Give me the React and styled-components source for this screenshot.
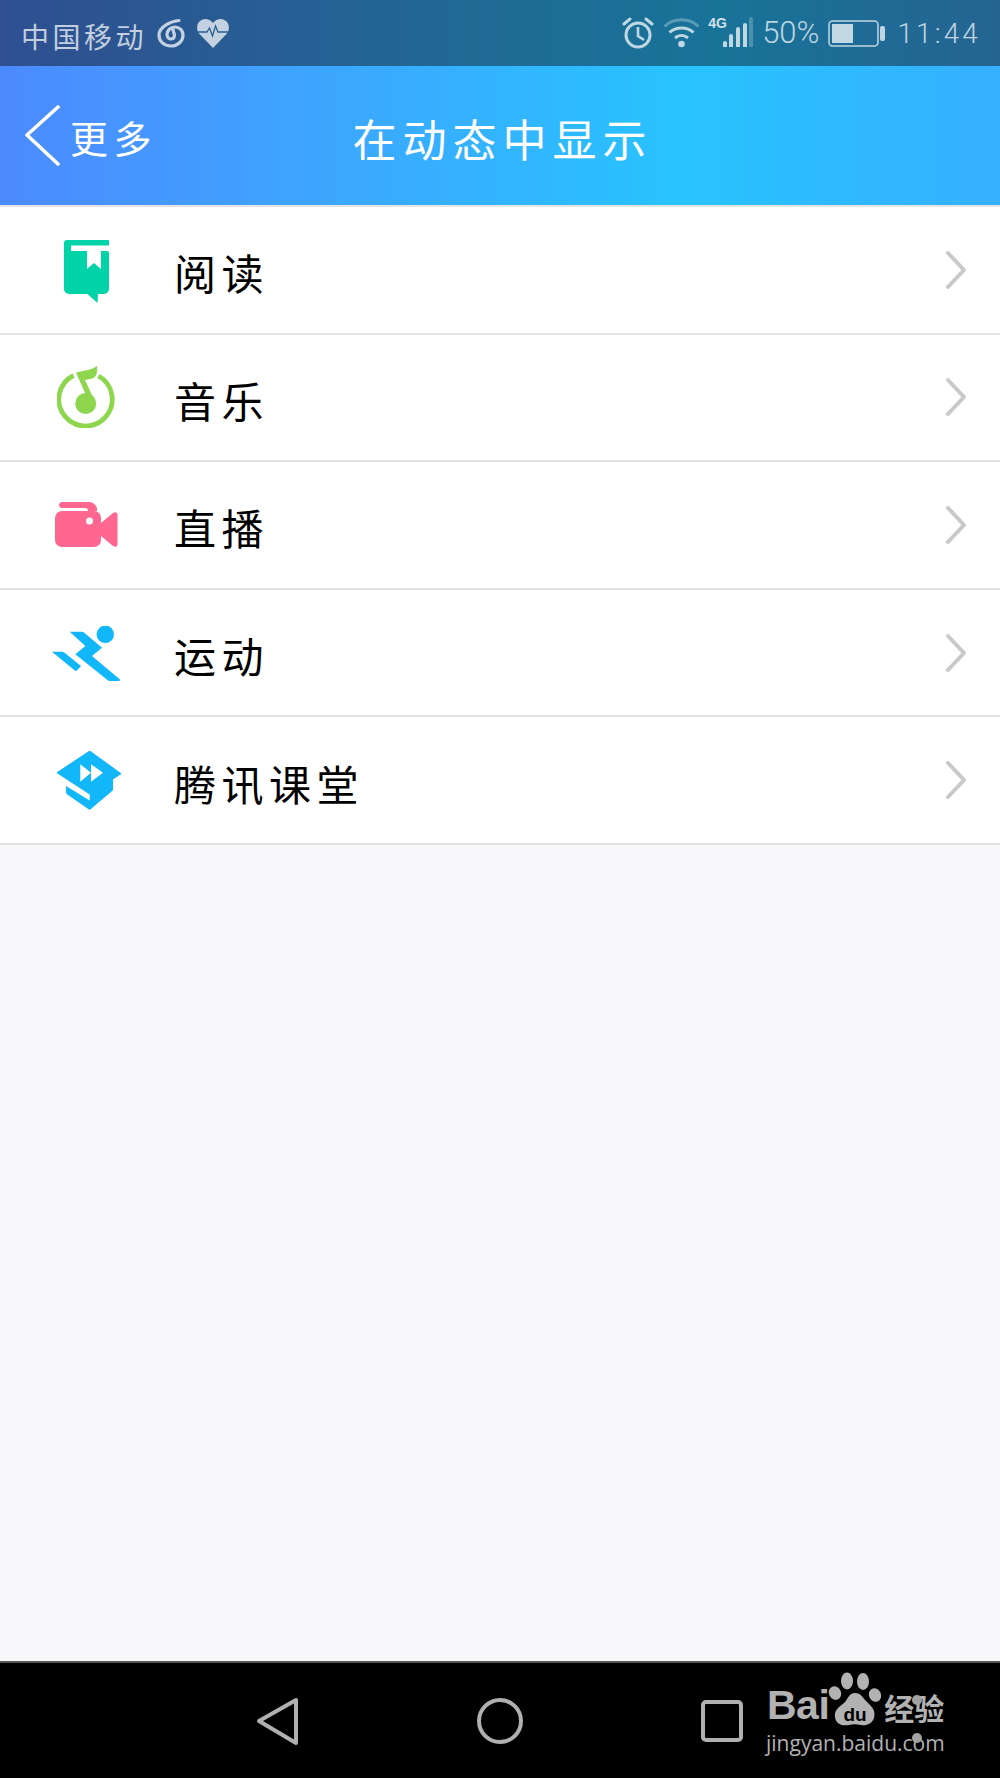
import styled, { createGlobalStyle } from "styled-components";

const GlobalStyle = createGlobalStyle`
    html, body {
        margin: 0;
        padding: 0;
        background: #f8f8fb;
    }
    * {
        box-sizing: border-box;
    }
    svg {
        flex: none;
        display: block;
    }
`;

const CJK = `"Noto Sans CJK SC", "Noto Sans", sans-serif`;
const STATUS_COLOR = "rgba(255,255,255,0.72)";

const Page = styled.div`
    position: relative;
    width: 1000px;
    height: 1778px;
    display: flex;
    flex-direction: column;
    background: #f8f8fb;
    font-family: ${CJK};
    overflow: hidden;
`;

const StatusBar = styled.div`
    height: 66px;
    flex: none;
    display: flex;
    justify-content: space-between;
    align-items: center;
    padding: 0 22px;
    color: ${STATUS_COLOR};
    background: linear-gradient(90deg, #2f4f90 0%, #1f6b96 50%, #187399 72%, #256492 100%);
`;

const StatusGroup = styled.div`
    display: flex;
    align-items: center;
`;

const Carrier = styled.span`
    font-size: 28px;
    letter-spacing: 3.5px;
    line-height: 32px;
    padding-top: 5px;
    margin-left: -1px;
    margin-right: 10px;
`;

const Percent = styled.span`
    font-family: Roboto, sans-serif;
    font-weight: 300;
    font-size: 31px;
    line-height: 32px;
    margin: 0 9px 0 9px;
`;

const Clock = styled.span`
    font-family: Roboto, sans-serif;
    font-weight: 300;
    font-size: 28px;
    letter-spacing: 3.1px;
    line-height: 32px;
    margin-left: 12px;
    margin-right: -3px;
    padding-top: 2px;
`;

const Signal = styled.div`
    position: relative;
    width: 45px;
    height: 30px;
    margin-left: 8px;
    margin-top: -2px;
    display: flex;
    align-items: flex-end;
    justify-content: flex-end;
    gap: 2.6px;
`;

const SignalTag = styled.span`
    position: absolute;
    left: 0;
    top: -2px;
    font-family: "Liberation Sans", sans-serif;
    font-weight: 700;
    font-size: 14px;
    line-height: 16px;
    color: rgba(255,255,255,0.8);
`;

const SignalBar = styled.i`
    display: block;
    width: 4px;
    height: ${(p) => p.$h}px;
    border-radius: 2px 2px 0 0;
    background: ${(p) => (p.$dim ? "rgba(255,255,255,0.22)" : STATUS_COLOR)};
`;

const Header = styled.header`
    height: 139px;
    flex: none;
    display: grid;
    grid-template-columns: 1fr auto 1fr;
    align-items: center;
    color: #fff;
    background: linear-gradient(90deg, #4c8aff 0%, #3ea4ff 30%, #28c3ff 68%, #36b0ff 100%);
`;

const Back = styled.div`
    display: flex;
    align-items: center;
    padding-left: 24px;
`;

const BackLabel = styled.span`
    font-size: 38px;
    letter-spacing: 5.5px;
    line-height: 44px;
    padding-top: 3px;
    margin-left: 10px;
`;

const Title = styled.h1`
    margin: 0;
    font-size: 44px;
    font-weight: 400;
    letter-spacing: 6px;
    line-height: 50px;
    padding-top: 4px;
    padding-left: 5px;
`;

const List = styled.ul`
    list-style: none;
    margin: 0;
    padding: 0;
    border-top: 2px solid #e4e4e4;
    background: #fff;
`;

const Row = styled.li`
    height: 127.6px;
    display: flex;
    align-items: center;
    padding-right: 33px;
    border-bottom: 2px solid #e3e3e3;
`;

const IconCell = styled.div`
    width: 174px;
    flex: none;
    display: flex;
    justify-content: center;
    padding-right: 2px;
    padding-top: ${(p) => p.$top || 0}px;
    padding-left: ${(p) => p.$left || 0}px;
`;

const Label = styled.span`
    flex: 1;
    color: #000;
    font-size: 42px;
    letter-spacing: 5.5px;
    line-height: 46px;
    padding-top: 5px;
`;

const Filler = styled.div`
    flex: 1;
`;

const NavBar = styled.nav`
    height: 117px;
    flex: none;
    display: flex;
    align-items: center;
    padding-left: 256px;
    background: #000;
    border-top: 2px solid #555;
    gap: 176px;
`;

const Watermark = styled.div`
    position: absolute;
    left: 766px;
    top: 1672px;
    width: 182px;
    color: #b2b2b2;
`;

const LogoLine = styled.div`
    display: flex;
    align-items: flex-end;
    height: 56px;
`;

const LogoBai = styled.span`
    font-family: "Liberation Sans", sans-serif;
    font-weight: 700;
    font-size: 41px;
    line-height: 46px;
    letter-spacing: -0.5px;
    margin-left: 1px;
`;

const LogoExp = styled.span`
    font-size: 30px;
    font-weight: 700;
    line-height: 42px;
`;

const LogoUrl = styled.div`
    font-family: "Open Sans", sans-serif;
    font-size: 21px;
    line-height: 28px;
    margin-top: 1px;
    white-space: nowrap;
`;

const WatermarkDot = styled.i`
    position: absolute;
    left: 146px;
    top: ${(p) => p.$top}px;
    width: 10px;
    height: 10px;
    border-radius: 50%;
    background: #a2a2a2;
`;

const PawSvg = styled.svg`
    margin-left: -1px;
`;

const HeartSvg = styled.svg`
    margin-left: 12px;
`;

const WifiSvg = styled.svg`
    margin-left: 9px;
`;

const Paw = () => (
    <PawSvg width="56" height="56" viewBox="0 0 56 56">
        <g fill="#b2b2b2">
            <ellipse cx="7" cy="21" rx="6" ry="7" transform="rotate(-25 7 21)" />
            <ellipse cx="19" cy="9" rx="6" ry="8.5" />
            <ellipse cx="35" cy="9.5" rx="6" ry="8.5" />
            <ellipse cx="47" cy="23" rx="6" ry="7" transform="rotate(-25 47 23)" />
            <path d="M27 21c6 0 8 5 12 9 5 5 9 8 7 16-2 6-8 8-13 7-4-1-8-1-12 0-6 1-13 0-14-8-1-7 4-10 9-14 4-4 5-10 11-10z" />
        </g>
        <text x="27" y="49" textAnchor="middle" fontFamily="Liberation Sans" fontWeight="700" fontSize="19" fill="#000">du</text>
    </PawSvg>
);

const Alarm = () => (
    <svg width="32" height="34" viewBox="0 0 32 34" fill="none" stroke="currentColor">
        <circle cx="16" cy="19" r="12" strokeWidth="3" />
        <path d="M16 11v9l6 4" strokeWidth="2.6" />
        <path d="M2 8l6-5M30 8l-6-5" strokeWidth="3" strokeLinecap="round" />
    </svg>
);

const Wifi = () => (
    <WifiSvg width="37" height="30" viewBox="0 0 37 30" fill="none" stroke="currentColor" strokeWidth="3">
        <path d="M1.5 8.5c9-9 25-9 34 0" opacity="0.4" />
        <path d="M6.5 14.5c6.5-6 17.5-6 24 0" />
        <path d="M12 20c4-3.5 9-3.5 13 0" />
        <circle cx="18.5" cy="26" r="3.3" fill="currentColor" stroke="none" />
    </WifiSvg>
);

const Battery = () => (
    <svg width="57" height="27" viewBox="0 0 57 27">
        <rect x="1" y="1" width="49" height="25" rx="3.5" fill="none" stroke="currentColor" strokeWidth="1.5" />
        <rect x="4" y="4" width="21" height="19" fill="#c2d8e2" />
        <rect x="52" y="6" width="5" height="15" rx="2" fill="currentColor" />
    </svg>
);

const Netease = () => (
    <svg width="28" height="30" viewBox="0 0 28 30" fill="none" stroke="currentColor" strokeWidth="3.2" strokeLinecap="round">
        <path d="M22 2.5C14 3 2 9 2 17c0 6.5 5 11 12 11s12-5 12-11c0-5-4-8-8-8-4.5 0-8 3.5-8 7.5 0 3 2 4.5 4 4.5s3.5-1.5 3.5-4l-2-7" />
    </svg>
);

const Heart = () => (
    <HeartSvg width="32" height="30" viewBox="0 0 32 30">
        <path d="M16 30L2.5 16C-1 12-.5 6 3 3c4-3.5 9.5-2.5 13 2 3.5-4.5 9-5.5 13-2 3.5 3 4 9 .5 13z" fill="currentColor" />
        <path d="M1 14h9l2.5-4 3 8 3-10 2.5 6h10" fill="none" stroke="#2a5f92" strokeWidth="1.3" />
    </HeartSvg>
);

const Chevron = () => (
    <svg width="22" height="40" viewBox="0 0 22 40" fill="none" stroke="#c9c9c9" strokeWidth="4" strokeLinecap="round" strokeLinejoin="round">
        <path d="M3 3l16 17L3 37" />
    </svg>
);

const BookIcon = () => (
    <svg width="45" height="63" viewBox="0 0 45 63">
        <path d="M3 0h40.5a1.5 1.5 0 0 1 0 5.5H7V11h36a2 2 0 0 1 2 2v36a5 5 0 0 1-5 5h-6l-.5 9-10-9H5a5 5 0 0 1-5-5V3a3 3 0 0 1 3-3z" fill="#00d3a7" />
        <path d="M23 11h14v18l-7-6-7 6z" fill="#fff" />
    </svg>
);

const MusicIcon = () => (
    <svg width="58" height="62" viewBox="0 0 58 62">
        <path d="M16.5 9.5a26.7 26.7 0 1 0 25 .5" fill="none" stroke="#8fd64f" strokeWidth="4.8" />
        <circle cx="28.7" cy="37.5" r="10.5" fill="#8fd64f" />
        <path d="M19 6.5C25 5 35 4 40 0c.5 4 0 9-2 11-3 2-6 2.5-10 3l11 24-5 2.5z" fill="#8fd64f" />
    </svg>
);

const CameraIcon = () => (
    <svg width="63" height="45" viewBox="0 0 63 45">
        <path d="M7 0h27c4 0 7 3 8 6v3H33c0-2-1-3-3-3H7C3 6 3 0 7 0z" fill="#ff6791" />
        <rect x="0" y="9" width="46" height="36" rx="7" fill="#ff6791" />
        <path d="M46 21l12-10c2-1.5 4.5-1 4.5 2v29c0 3-2.500 3.500-4.500 2L46 34z" fill="#ff6791" />
        <circle cx="34.5" cy="19" r="3.5" fill="#fff" />
    </svg>
);

const RunnerIcon = () => (
    <svg width="68" height="55" viewBox="0 0 68 55">
        <g fill="#12b7fa">
            <circle cx="53.3" cy="8.3" r="8.7" />
            <path d="M17.7 5.7h12l2 .5L50 21.7 40 30l27.7 23.3c.5.8 0 1.7-1 1.7H58c-1 0-2-.5-2.5-1L23.3 28.3 33.3 20z" />
            <path d="M0 25.7h9.7c1 0 2 .3 2.5.8L29 40l-4 4.5c-.6.6-1.5.6-2.2 0z" />
        </g>
    </svg>
);

const ClassIcon = () => (
    <svg width="64" height="59" viewBox="0 0 64 59">
        <path d="M32.7 0L64 22.7 32.7 43 0 21.7z" fill="#12b7fa" strokeLinejoin="round" stroke="#12b7fa" strokeWidth="1" />
        <path d="M9 35l23.7 14.5V41L56 27v11c0 1-.5 2-1.500 2.500L32.700 59 11 44c-1.500-1-2-2-2-3.500z" fill="#12b7fa" />
        <path d="M23.3 13.3L34 21.7l-10.7 9zM34 13.3l12 8.4-12 9z" fill="#fff" />
    </svg>
);

const BackArrow = () => (
    <svg width="36" height="62" viewBox="0 0 36 62" fill="none" stroke="#fff" strokeWidth="3.6" strokeLinecap="round" strokeLinejoin="round">
        <path d="M34 2L3 30l31 29" />
    </svg>
);

const NavBack = () => (
    <svg width="44" height="48" viewBox="0 0 44 48" fill="none" stroke="#b0b0b0" strokeWidth="4" strokeLinejoin="round">
        <path d="M3 24L40 3v43z" />
    </svg>
);

const NavHome = () => (
    <svg width="48" height="48" viewBox="0 0 48 48" fill="none" stroke="#b0b0b0" strokeWidth="4">
        <circle cx="24" cy="24" r="21" />
    </svg>
);

const NavRecent = () => (
    <svg width="44" height="44" viewBox="0 0 44 44" fill="none" stroke="#b0b0b0" strokeWidth="4">
        <rect x="3" y="3" width="38" height="38" rx="3" />
    </svg>
);

const items = [
    { label: "阅读", Icon: BookIcon, top: 4 },
    { label: "音乐", Icon: MusicIcon },
    { label: "直播", Icon: CameraIcon },
    { label: "运动", Icon: RunnerIcon, top: 2 },
    { label: "腾讯课堂", Icon: ClassIcon, left: 5 },
];

export default function App() {
    return (
        <Page>
            <GlobalStyle />
            <StatusBar>
                <StatusGroup>
                    <Carrier>中国移动</Carrier>
                    <Netease />
                    <Heart />
                </StatusGroup>
                <StatusGroup>
                    <Alarm />
                    <Wifi />
                    <Signal>
                        <SignalTag>4G</SignalTag>
                        <SignalBar $h={6} />
                        <SignalBar $h={13} />
                        <SignalBar $h={20} />
                        <SignalBar $h={24} />
                        <SignalBar $h={30} $dim />
                    </Signal>
                    <Percent>50%</Percent>
                    <Battery />
                    <Clock>11:44</Clock>
                </StatusGroup>
            </StatusBar>
            <Header>
                <Back>
                    <BackArrow />
                    <BackLabel>更多</BackLabel>
                </Back>
                <Title>在动态中显示</Title>
                <span />
            </Header>
            <List>
                {items.map(({ label, Icon, top, left }) => (
                    <Row key={label}>
                        <IconCell $top={top} $left={left}>
                            <Icon />
                        </IconCell>
                        <Label>{label}</Label>
                        <Chevron />
                    </Row>
                ))}
            </List>
            <Filler />
            <NavBar>
                <NavBack />
                <NavHome />
                <NavRecent />
            </NavBar>
            <Watermark>
                <LogoLine>
                    <LogoBai>Bai</LogoBai>
                    <Paw />
                    <LogoExp>经验</LogoExp>
                </LogoLine>
                <LogoUrl>jingyan.baidu.com</LogoUrl>
                <WatermarkDot $top={23} />
                <WatermarkDot $top={61} />
            </Watermark>
        </Page>
    );
}
